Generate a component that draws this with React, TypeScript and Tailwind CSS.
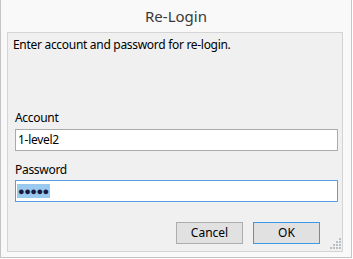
import React from "react"

const font = { fontFamily: '"Segoe UI", "Noto Sans", "Open Sans", sans-serif' }

// tiny resize grip in the corner
const Grip: React.FC = () => {
  const dots = [
    [9, 0],
    [6, 3], [9, 3],
    [3, 6], [6, 6], [9, 6],
    [0, 9], [3, 9], [6, 9], [9, 9],
  ]
  return (
    <svg width="11" height="11" className="absolute right-[1px] bottom-[2px]">
      {dots.map(([x, y], i) => (
        <rect key={i} x={x} y={y} width="2" height="2" fill="#b8bfc8" />
      ))}
    </svg>
  )
}

const App: React.FC = () => {
  return (
    <div
      className="w-[352px] h-[258px] bg-[#f9f9f9] border-l border-r border-b border-[#c4c4c4] flex flex-col"
      style={font}
    >
      {/* Title */}
      <div className="h-[32px] flex items-center justify-center text-[15px] text-[#3a3a3a]">
        Re-Login
      </div>

      {/* Body */}
      <div className="relative ml-[6px] w-[336px] h-[220px] bg-[#f0f0f0] border border-[#d4d4d4] text-[12px] text-black tracking-[-0.3px]">
        <div className="mt-[4px] ml-[5px] h-[16px] leading-[16px]">
          Enter account and password for re-login.
        </div>

        <div className="mt-[57px] ml-[7px] h-[16px] leading-[16px]">Account</div>
        <div className="mt-[3px] ml-[7px] w-[323px] h-[22px] bg-white border border-[#ababab] flex items-center pl-[2px]">
          1-level2
        </div>

        <div className="mt-[11px] ml-[7px] h-[16px] leading-[16px]">Password</div>
        <div className="mt-[2px] ml-[7px] w-[323px] h-[22px] bg-white border border-[#569de5] flex items-center pl-[1px]">
          <span className="bg-[#99c9ef] text-[#1a1a40] h-[14px] leading-[14px] px-[1px] text-[11px] tracking-[-0.5px]">
            ●●●●●
          </span>
        </div>

        <div className="mt-[20px] flex gap-[10px] pl-[168px] tracking-normal">
          <button className="w-[67px] h-[22px] bg-[#e1e1e1] border border-[#adadad] text-[12px] text-black">
            Cancel
          </button>
          <button className="w-[67px] h-[22px] bg-[#e1e1e1] border border-[#3c98ea] text-[12px] text-black">
            OK
          </button>
        </div>

        <Grip />
      </div>
    </div>
  )
}

export default App
